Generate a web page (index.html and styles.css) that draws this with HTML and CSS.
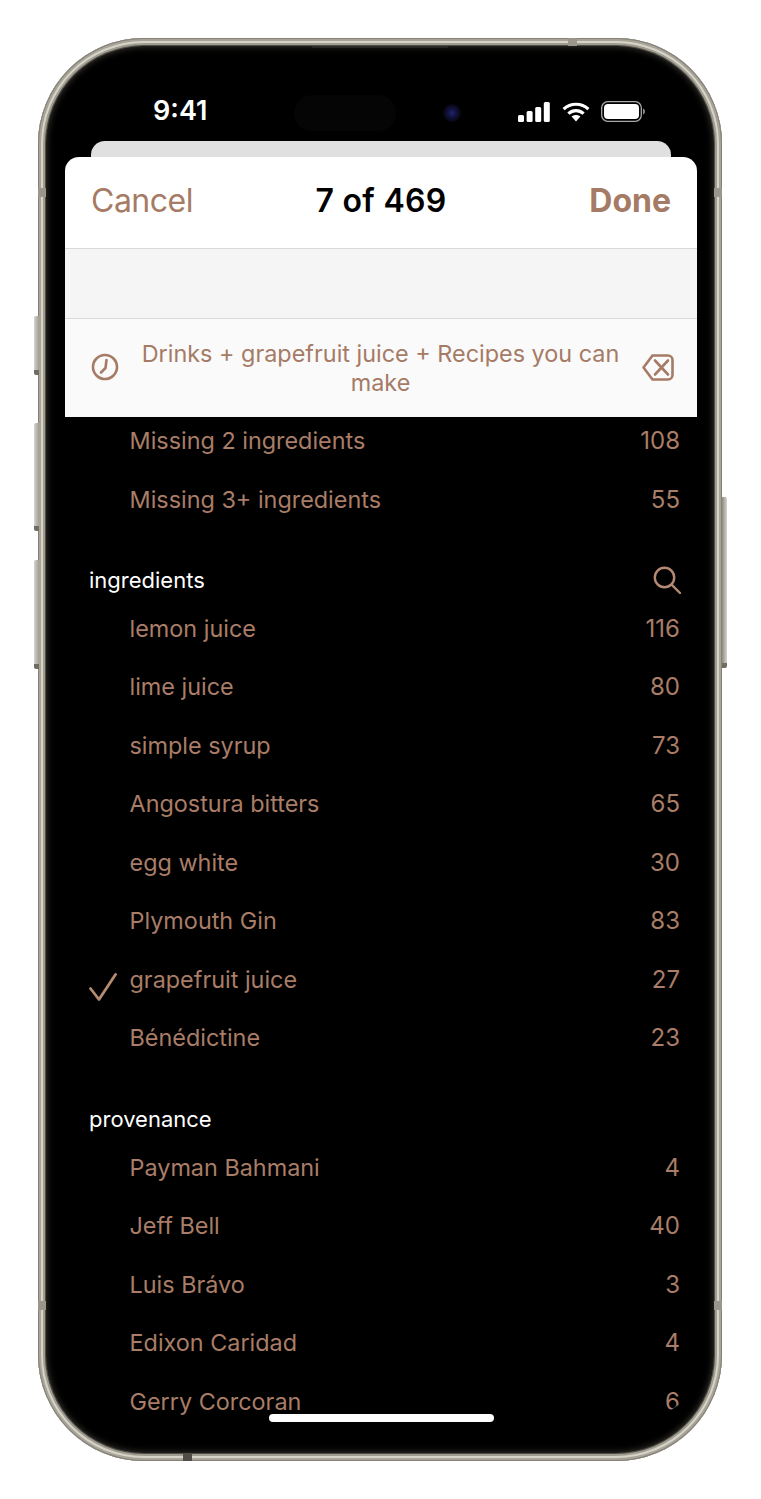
FILE: index.html
```html
<!DOCTYPE html>
<html lang="en">
    <head>
        <meta charset="utf-8">
        <title>7 of 469</title>
        <link rel="stylesheet" href="styles.css">
    </head>
    <body>
        <div class="phone">
            <!-- side buttons and antenna bands -->
            <span class="btn btn-action"></span>
            <span class="btn btn-up"></span>
            <span class="btn btn-down"></span>
            <span class="btn btn-power"></span>
            <span class="band band-top"></span>
            <span class="band band-bottom"></span>
            <span class="band band-l1"></span>
            <span class="band band-l2"></span>
            <span class="band band-r1"></span>
            <span class="band band-r2"></span>

            <div class="screen">
                <span class="speaker"></span>
                <span class="island"></span>
                <span class="camera"></span>

                <div class="status">
                    <span class="time">9:41</span>
                    <div class="status-icons">
                        <svg width="32" height="20" viewBox="0 0 32 20" fill="#fff">
                            <rect x="0" y="13" width="6" height="7" rx="1.5"/>
                            <rect x="8.6" y="9" width="6" height="11" rx="1.5"/>
                            <rect x="17.2" y="5" width="6" height="15" rx="1.5"/>
                            <rect x="25.8" y="0" width="6" height="20" rx="1.5"/>
                        </svg>
                        <svg width="28" height="20" viewBox="0 0 28 20" fill="none" stroke="#fff">
                            <path d="M1.6 7.2C8.6 .6 19.4 .6 26.4 7.2" stroke-width="3.2"/>
                            <path d="M6.4 11.6C10.8 7.6 17.2 7.6 21.6 11.6" stroke-width="3.2"/>
                            <path d="M9.6 14.6 14 19.4 18.4 14.6C15.8 12.6 12.2 12.6 9.6 14.6Z" fill="#fff" stroke="none"/>
                        </svg>
                        <svg width="44" height="21" viewBox="0 0 44 21" fill="none">
                            <rect x=".7" y=".7" width="39.6" height="19.6" rx="6" stroke="#a9a9a9" stroke-width="1.3"/>
                            <rect x="3" y="3" width="35" height="15" rx="4" fill="#fff"/>
                            <path d="M42 7.5c1.3.5 2 1.6 2 3s-.7 2.5-2 3Z" fill="#8c8c8c"/>
                        </svg>
                    </div>
                </div>

                <div class="back-sheet"></div>

                <div class="sheet">
                    <div class="sheet-head">
                        <span class="cancel">Cancel</span>
                        <span class="count-title">7 of 469</span>
                        <span class="done">Done</span>
                    </div>
                    <div class="sheet-band"></div>
                    <div class="sheet-query">
                        <svg width="28" height="28" viewBox="0 0 28 28" fill="none" stroke="#a67b66" stroke-width="2.6" stroke-linecap="round" stroke-linejoin="round">
                            <circle cx="14" cy="14" r="12"/>
                            <path d="M15.5 7 14.5 15 10 19.5"/>
                        </svg>
                        <p>Drinks + grapefruit juice + Recipes you can make</p>
                        <svg width="32" height="27" viewBox="0 0 32 27" fill="none" stroke="#a67b66" stroke-width="2.6" stroke-linecap="round" stroke-linejoin="round">
                            <path d="M10.5 1.5H26a4.5 4.5 0 0 1 4.5 4.5v15a4.5 4.5 0 0 1-4.5 4.5H10.5L1.5 13.5Z"/>
                            <path d="M13 6.5 26 20.5M26 6.5 13 20.5"/>
                        </svg>
                    </div>
                </div>

                <div class="list">
                    <div class="row"><span class="mark"></span><span class="name">Missing 2 ingredients</span><span class="num">108</span></div>
                    <div class="row"><span class="mark"></span><span class="name">Missing 3+ ingredients</span><span class="num">55</span></div>

                    <div class="section">
                        <span>ingredients</span>
                        <svg width="28" height="28" viewBox="0 0 28 28" fill="none" stroke="#b58a72" stroke-width="2.4" stroke-linecap="round">
                            <circle cx="11.5" cy="11.5" r="9.7"/>
                            <path d="M18.6 18.6 27 27"/>
                        </svg>
                    </div>
                    <div class="row"><span class="mark"></span><span class="name">lemon juice</span><span class="num">116</span></div>
                    <div class="row"><span class="mark"></span><span class="name">lime juice</span><span class="num">80</span></div>
                    <div class="row"><span class="mark"></span><span class="name">simple syrup</span><span class="num">73</span></div>
                    <div class="row"><span class="mark"></span><span class="name">Angostura bitters</span><span class="num">65</span></div>
                    <div class="row"><span class="mark"></span><span class="name">egg white</span><span class="num">30</span></div>
                    <div class="row"><span class="mark"></span><span class="name">Plymouth Gin</span><span class="num">83</span></div>
                    <div class="row">
                        <span class="mark">
                            <svg width="28" height="28" viewBox="0 0 28 28" fill="none" stroke="#b58a72" stroke-width="2.8" stroke-linecap="round" stroke-linejoin="round">
                                <path d="M1.5 15.5 10 26.5 26.5 1.5"/>
                            </svg>
                        </span>
                        <span class="name">grapefruit juice</span><span class="num">27</span>
                    </div>
                    <div class="row"><span class="mark"></span><span class="name">Bénédictine</span><span class="num">23</span></div>

                    <div class="section section-last"><span>provenance</span></div>
                    <div class="row"><span class="mark"></span><span class="name">Payman Bahmani</span><span class="num">4</span></div>
                    <div class="row"><span class="mark"></span><span class="name">Jeff Bell</span><span class="num">40</span></div>
                    <div class="row"><span class="mark"></span><span class="name">Luis Brávo</span><span class="num">3</span></div>
                    <div class="row"><span class="mark"></span><span class="name">Edixon Caridad</span><span class="num">4</span></div>
                    <div class="row"><span class="mark"></span><span class="name">Gerry Corcoran</span><span class="num">6</span></div>
                </div>

                <span class="home-bar"></span>
            </div>
        </div>
    </body>
</html>
```

FILE: styles.css
```css
*{
    margin: 0;
    box-sizing: border-box;
}
body{
    background-color: #fff;
    font-family: Inter, "Liberation Sans", sans-serif;
}

/*phone frame*/
.phone{
    position: relative;
    width: 684px;
    height: 1423px;
    margin: 38px 0 0 38px;
    padding: 8px;
    border-radius: 106px;
    background-color: #b4b0a4;
    box-shadow: inset 0 0 0 1px #85817a, inset 0 0 0 3px #a8a498, inset 0 0 0 5px #d6d3c9, inset 0 0 0 7px #a09c90, inset 0 0 0 8px #4e4c45;
}
.screen{
    position: relative;
    height: 100%;
    border-radius: 98px;
    background-color: #000;
    overflow: hidden;
}
.screen::after{
    content: "";
    position: absolute;
    top: 0;
    right: 0;
    bottom: 0;
    left: 0;
    border-radius: 98px;
    box-shadow: inset 0 0 7px #45433d;
    pointer-events: none;
}

/*buttons on the edge*/
.btn{
    position: absolute;
    width: 5px;
    border-bottom: 5px solid #6f6c64;
}
.btn-action,.btn-up,.btn-down{
    left: -4px;
    border-radius: 2px 0 0 2px;
    background: linear-gradient(to right, #d6d4cc, #a19e94);
}
.btn-action{
    top: 278px;
    height: 59px;
}
.btn-up{
    top: 385px;
    height: 108px;
}
.btn-down{
    top: 522px;
    height: 109px;
}
.btn-power{
    right: -5px;
    top: 459px;
    height: 171px;
    border-radius: 0 2px 2px 0;
    background: linear-gradient(to left, #d6d4cc, #8e8b81);
}
.band{
    position: absolute;
    background-color: #9a968b;
}
.band-top{
    left: 530px;
    top: 0;
    width: 9px;
    height: 8px;
}
.band-bottom{
    left: 145px;
    bottom: 0;
    width: 9px;
    height: 8px;
    background-color: #4f4d46;
}
.band-l1,.band-l2{
    left: 0;
    width: 8px;
    height: 9px;
}
.band-r1,.band-r2{
    right: 0;
    width: 8px;
    height: 9px;
}
.band-l1,.band-r1{
    top: 150px;
}
.band-l2,.band-r2{
    top: 1263px;
}

/*dynamic island*/
.speaker{
    position: absolute;
    left: 266px;
    top: 0;
    width: 136px;
    height: 2px;
    background-color: #1c1b19;
}
.island{
    position: absolute;
    left: 248px;
    top: 49px;
    width: 102px;
    height: 36px;
    border-radius: 18px;
    background-color: #050505;
}
.camera{
    position: absolute;
    left: 397px;
    top: 58px;
    width: 18px;
    height: 18px;
    border-radius: 50%;
    background: radial-gradient(circle, #20246a 0, #10123c 35%, #06060f 70%, #000 100%);
}

/*status bar*/
.status{
    height: 95px;
    padding: 48px 69px 0 107px;
    display: flex;
    justify-content: space-between;
    align-items: flex-start;
}
.time{
    color: #fff;
    font-size: 27px;
    font-weight: 600;
    line-height: 34px;
}
.status-icons{
    display: flex;
    align-items: center;
    gap: 11.5px;
    padding-top: 7px;
}
.status-icons svg{
    display: block;
}

/*sheet*/
.back-sheet{
    height: 16px;
    margin: 0 43px 0 45px;
    border-radius: 14px 14px 0 0;
    background-color: #e0e0e0;
}
.sheet{
    margin: 0 17px 0 19px;
    border-radius: 14px 14px 0 0;
    background-color: #fff;
    overflow: hidden;
}
.sheet-head{
    height: 92px;
    padding: 0 26px 4px 26px;
    display: grid;
    grid-template-columns: 1fr auto 1fr;
    align-items: center;
    border-bottom: 1px solid #d9d9d9;
    font-size: 32px;
}
.cancel{
    color: #a67b66;
    font-weight: 400;
    letter-spacing: -0.5px;
}
.count-title{
    color: #000;
    font-weight: 600;
    letter-spacing: 0.3px;
}
.done{
    color: #a67b66;
    font-weight: 700;
    text-align: right;
}
.sheet-band{
    height: 70px;
    background-color: #f5f5f5;
    border-bottom: 1px solid #d9d9d9;
}
.sheet-query{
    height: 98px;
    padding: 0 23px 0 26px;
    display: flex;
    align-items: center;
    background-color: #fafafa;
}
.sheet-query svg{
    flex: none;
    margin-bottom: 2px;
}
.sheet-query p{
    flex: 1;
    padding: 0 14px;
    color: #a67b66;
    font-size: 23.4px;
    line-height: 29px;
    text-align: center;
}

/*filter list*/
.list{
    height: 998px;
    margin: 0 17px 0 19px;
    padding: 9px 17px 0 24px;
    border-radius: 0 0 48px 48px;
    overflow: hidden;
}
.row{
    height: 58.5px;
    display: flex;
    line-height: 29px;
    font-size: 23.4px;
    color: #a97d67;
}
.mark{
    width: 40.5px;
    flex: none;
}
.mark svg{
    display: block;
    margin-top: 8px;
}
.name{
    flex: 1;
}
.num{
    font-size: 24px;
}
.section{
    height: 47.5px;
    margin-top: 23px;
    display: flex;
    justify-content: space-between;
    color: #fff;
    font-size: 22px;
    line-height: 29px;
}
.section-last{
    height: 48px;
}
.section svg{
    margin-right: -1px;
}

.home-bar{
    position: absolute;
    left: 223px;
    bottom: 31px;
    width: 225px;
    height: 8px;
    border-radius: 4px;
    background-color: #fff;
}
```
